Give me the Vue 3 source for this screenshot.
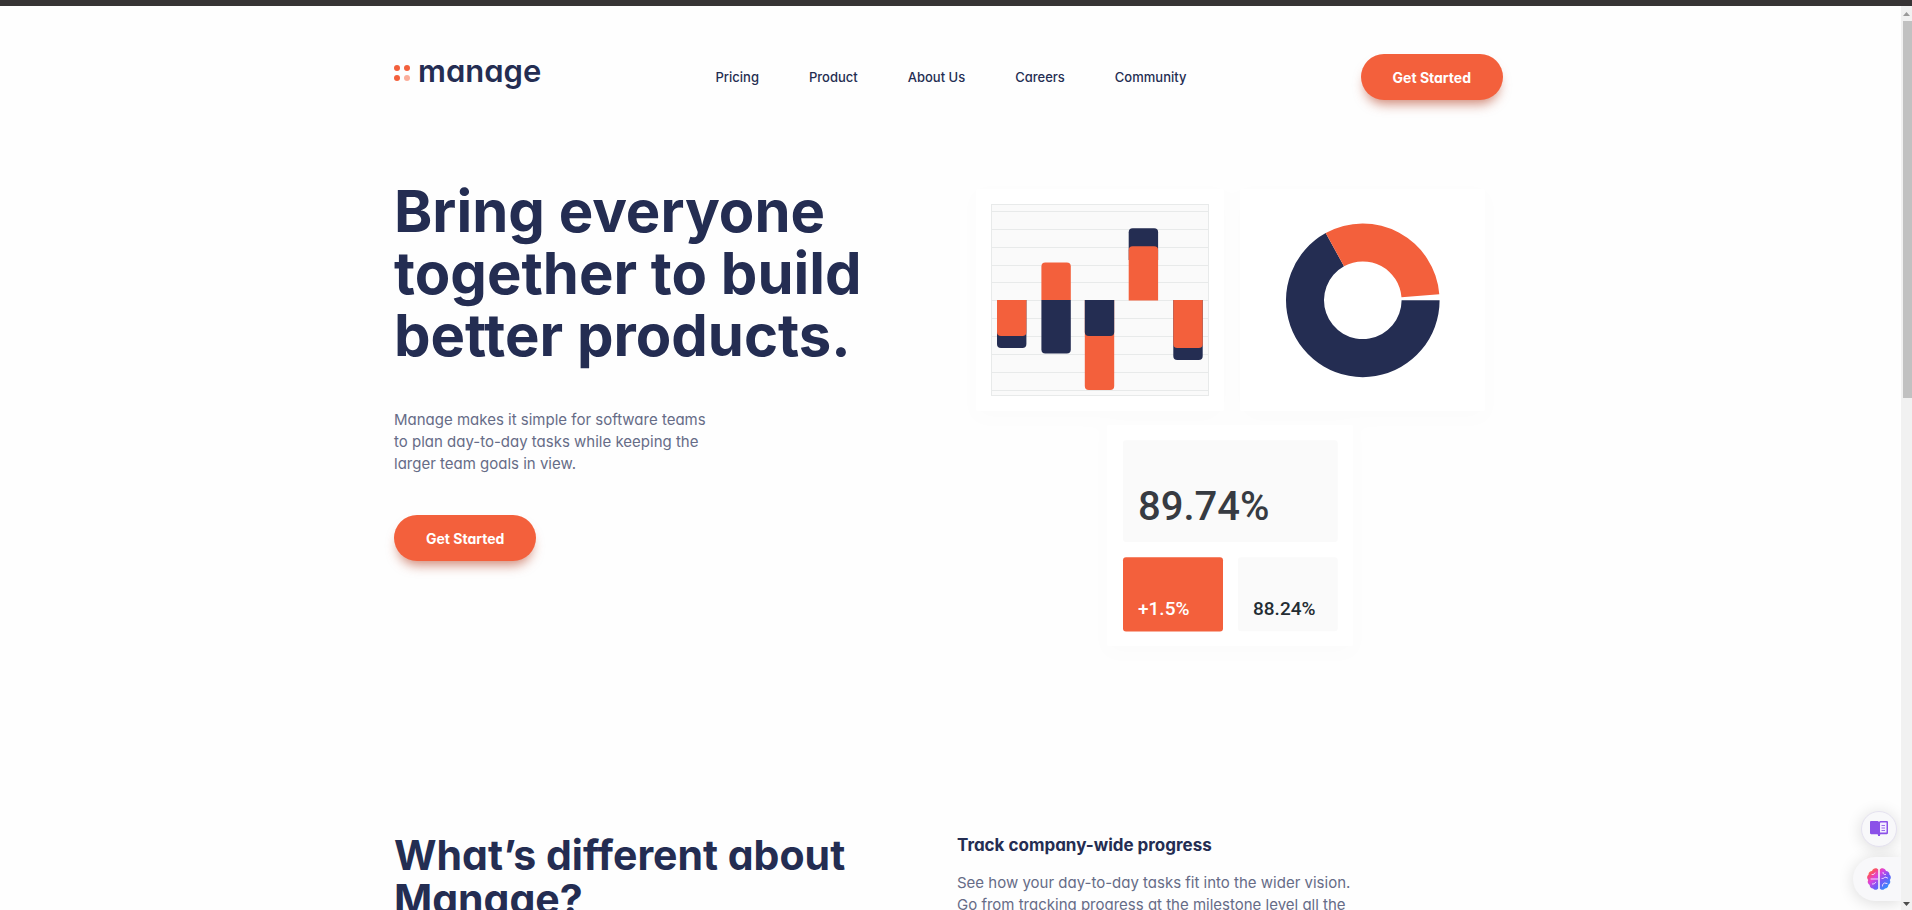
<script setup>
const links = ['Pricing', 'Product', 'About Us', 'Careers', 'Community']
const gridLines = [211, 229, 247, 265, 282, 300, 318, 336, 354, 372, 390]
</script>

<template>
  <div class="window">
    <div class="topbar"></div>
    <div class="viewport">
      <div class="page">
        <header class="header">
          <a class="logo" href="#" aria-label="manage">
            <svg class="dots" viewBox="0 -4 16 20" aria-hidden="true">
              <circle cx="3" cy="3" r="3" fill="#f3603c" />
              <circle cx="13" cy="3" r="3" fill="#f3603c" />
              <circle cx="3" cy="13" r="3" fill="#f3603c" />
              <circle cx="13" cy="13" r="3" fill="#fbae9b" />
            </svg>
            <span class="brand">manage</span>
          </a>
          <nav class="nav">
            <a v-for="link in links" :key="link" href="#">{{ link }}</a>
          </nav>
          <button class="cta" type="button">Get Started</button>
        </header>

        <main>
          <section class="hero">
            <div>
              <h1>Bring everyone<br />together to build<br />better products.</h1>
              <p class="lead">
                Manage makes it simple for software teams<br />to plan day-to-day tasks while keeping the<br />larger team goals in view.
              </p>
              <button class="cta" type="button">Get Started</button>
            </div>
            <svg class="charts" viewBox="957 180 546 500" role="img" aria-label="Team statistics">
              <defs>
                <filter id="soft" x="-20%" y="-20%" width="140%" height="140%">
                  <feDropShadow dx="0" dy="6" stdDeviation="10" flood-color="#000" flood-opacity="0.012" />
                </filter>
              </defs>
              <g fill="#fff" filter="url(#soft)">
                <rect x="976" y="189" width="248" height="222" rx="3" />
                <rect x="1240" y="189" width="245" height="222" rx="3" />
                <rect x="1107" y="425" width="246" height="221" rx="3" />
              </g>

              <rect x="991.5" y="204.5" width="217" height="191" fill="#fafafa" stroke="#e8eaea" />
              <path v-for="y in gridLines" :key="y" :d="`M992 ${y + 0.5}H1209`" stroke="#e8eaea" />
              <g fill="#242d52">
                <path d="M997 300h29.4v44a4 4 0 0 1-4 4h-21.4a4 4 0 0 1-4-4z" />
                <path d="M1041.4 300h29.4v49.6a4 4 0 0 1-4 4h-21.4a4 4 0 0 1-4-4z" />
                <path d="M1128.7 260v-27.7a4 4 0 0 1 4-4h21.4a4 4 0 0 1 4 4v27.7z" />
                <path d="M1173.3 300h29.4v56a4 4 0 0 1-4 4h-21.4a4 4 0 0 1-4-4z" />
              </g>
              <g fill="#f3603c">
                <path d="M997 300h29.4v32a4 4 0 0 1-4 4h-21.4a4 4 0 0 1-4-4z" />
                <path d="M1041.4 300v-33.4a4 4 0 0 1 4-4h21.4a4 4 0 0 1 4 4v33.4z" />
                <path d="M1084.8 300h29.4v86a4 4 0 0 1-4 4h-21.4a4 4 0 0 1-4-4z" />
                <path d="M1128.7 300.6v-50.4a4 4 0 0 1 4-4h21.4a4 4 0 0 1 4 4v50.4z" />
                <path d="M1173.3 300h29.4v44a4 4 0 0 1-4 4h-21.4a4 4 0 0 1-4-4z" />
              </g>
              <path fill="#242d52" d="M1084.8 300h29.4v32a4 4 0 0 1-4 4h-21.4a4 4 0 0 1-4-4z" />

              <path
                fill="#242d52"
                d="M1439.6 300.3A76.8 76.8 0 1 1 1325.7 233.1L1344 266.3A38.8 38.8 0 1 0 1401.6 300.3z"
              />
              <path
                fill="#f3603c"
                d="M1325.7 233.1A76.8 76.8 0 0 1 1439.3 294.3L1401.5 297.3A38.8 38.8 0 0 0 1344 266.3z"
              />

              <rect x="1123" y="440.3" width="214.7" height="101.7" rx="3" fill="#fafafa" />
              <rect x="1123" y="557.3" width="100" height="74.2" rx="3" fill="#f3603c" />
              <rect x="1238" y="557.3" width="99.7" height="74" rx="3" fill="#fafafa" />
              <text class="stat-large" x="1138" y="520">89.74%</text>
              <text class="stat light" x="1138" y="615">+1.5%</text>
              <text class="stat" x="1253" y="615">88.24%</text>
            </svg>
          </section>

          <section class="features">
            <h2>What’s different about<br />Manage?</h2>
            <article>
              <h3>Track company-wide progress</h3>
              <p>
                See how your day-to-day tasks fit into the wider vision.<br />Go from tracking progress at the milestone level all the
              </p>
            </article>
          </section>
        </main>
      </div>

      <button class="tool reader" type="button" aria-label="Open reader">
        <svg width="18" height="16" viewBox="0 0 18 16" aria-hidden="true">
          <path fill="#8b51e8" d="M0 1.2C0 .5.5 0 1.2 0H7c1 0 1.6.4 2 1 .4-.6 1-1 2-1h5.800C17.500 0 18 .5 18 1.200V12c0 .7-.5 1.200-1.200 1.200H11c-.6 0-1 .4-1 1V15H8v-.8c0-.6-.4-1-1-1H1.200C.5 13.200 0 12.700 0 12z" />
          <path fill="#f3edff" d="M10 2.600c0-.7.4-1 1-1h5.500v10H10z" />
          <path stroke="#9a6bea" d="M11.500 4.500H15M11.500 7H15M11.500 9.500H15" />
        </svg>
      </button>
      <button class="tool assistant" type="button" aria-label="Open assistant">
        <svg width="24" height="22" viewBox="0 0 24 22" aria-hidden="true">
          <defs>
            <linearGradient id="brain" x1="0" y1="0" x2="1" y2="1">
              <stop offset="0" stop-color="#ffa11f" />
              <stop offset=".22" stop-color="#f94b73" />
              <stop offset=".38" stop-color="#dd43dc" />
              <stop offset=".6" stop-color="#7658f6" />
              <stop offset="1" stop-color="#12a8ff" />
            </linearGradient>
          </defs>
          <path
            fill="url(#brain)"
            d="M11.200 1.500V20.500C10 22 7.500 22.300 6 20.500 4 20.500 2.500 19 2.700 17 .8 16 .2 13.800 1.200 12-.3 10.500-.2 8 1.500 6.800 1.400 4.500 3 3 5 3 6-.2 9.500-.7 11.200 1.500zM12.800 1.500C14.500-.7 18-.2 19 3c2 0 3.600 1.500 3.500 3.800 1.700 1.200 1.800 3.700.3 5.200 1 1.800.4 4-1.500 5 .2 2-1.300 3.500-3.300 3.500-1.500 1.800-4 1.500-5.200 0z"
          />
          <path
            fill="none"
            stroke="#f2dcff"
            stroke-linecap="round"
            d="M11 11H4M5 6.500c1.500.3 2.500-.3 3-1.500M5.500 16c1.500 0 2.500-.3 3-1.500M16 4.500c0 1.500 1 2.300 2.500 2M15 10.500c1.500 0 2.500-.5 3-1.500l2.500 1M15.500 18c0-1.500.5-2.500 2-3l2.500.500"
          />
        </svg>
      </button>
    </div>
    <div class="scrollbar" aria-hidden="true">
      <svg width="11" height="15" viewBox="0 0 11 15"><path fill="#9a9a9a" d="M2 10h7L5.500 6z" /></svg>
      <div class="thumb"></div>
      <svg width="11" height="12" viewBox="0 0 11 12"><path fill="#4c4c4c" d="M2 4h7L5.500 8z" /></svg>
    </div>
  </div>
</template>

<style>
body {
  margin: 0;
  overflow: hidden;
}
</style>

<style scoped>
.window {
  display: grid;
  grid-template: 6px minmax(0, 1fr) / minmax(0, 1fr) 11px;
  height: 100vh;
  background: #fefefe;
  color: #242d52;
  font-family: Inter, "Liberation Sans", sans-serif;
  font-feature-settings: "cv11";
}
.topbar {
  grid-column: 1 / -1;
  background: #373435;
}
.viewport {
  position: relative;
  overflow: hidden;
}
.page {
  max-width: 1109px;
  margin: 0 auto;
  padding: 48px 28px 0 24px;
}
.header {
  display: flex;
  align-items: center;
  justify-content: space-between;
}
.logo {
  display: flex;
  align-items: center;
  align-self: flex-start;
  gap: 8px;
  color: inherit;
  text-decoration: none;
}
.dots {
  width: 16px;
  height: 20px;
}
.brand {
  font-size: 31px;
  font-weight: 600;
  line-height: 34px;
}
.nav {
  display: flex;
  gap: 50px;
}
.nav a {
  color: #242d52;
  font-size: 13px;
  font-weight: 500;
  line-height: 20px;
  text-decoration: none;
}
.cta {
  height: 46px;
  padding: 0 32px;
  border: 0;
  border-radius: 23px;
  background: #f3603c;
  box-shadow: 0 8px 12px -4px rgba(180, 60, 30, 0.6);
  color: #fff;
  font: inherit;
  font-feature-settings: "cv11";
  font-size: 14px;
  font-weight: 700;
}
.hero,
.features {
  display: grid;
  grid-template-columns: 563px minmax(0, 1fr);
}
.hero {
  margin-top: 80px;
}
h1,
h2,
h3,
p {
  margin: 0;
}
h1 {
  font-size: 58px;
  font-weight: 700;
  line-height: 62px;
}
p {
  color: #666c87;
  font-size: 15px;
  line-height: 22px;
}
.lead {
  margin: 43px 0 40px;
}
.charts {
  display: block;
  width: 100%;
  overflow: visible;
}
.stat,
.stat-large {
  fill: #242d33;
  font-family: Roboto, sans-serif;
  font-size: 19px;
  font-weight: 500;
}
.stat-large {
  fill: #373b42;
  font-size: 40px;
}
.light {
  fill: #fff;
}
.features {
  margin-top: 153px;
}
h2 {
  font-size: 41px;
  font-weight: 700;
  line-height: 44px;
}
h3 {
  margin-bottom: 15px;
  font-size: 17px;
  font-weight: 700;
  line-height: 24px;
}
.tool {
  position: absolute;
  display: flex;
  align-items: center;
  justify-content: center;
  padding: 0;
  border: 0;
  background: #f8f8fa;
  box-shadow: 0 2px 16px rgba(0, 0, 0, 0.14);
}
.reader {
  right: 4px;
  bottom: 63px;
  width: 36px;
  height: 36px;
  border: 1px solid #e5e2f0;
  border-radius: 50%;
}
.assistant {
  right: 0;
  bottom: 9px;
  width: 48px;
  height: 44px;
  padding-left: 4px;
  border-radius: 22px 0 0 22px;
}
.scrollbar {
  display: grid;
  grid-template-rows: 15px minmax(0, 1fr) 12px;
  background: #f1f1f1;
}
.thumb {
  height: 43%;
  margin-left: 2px;
  background: #c1c1c1;
}
</style>
